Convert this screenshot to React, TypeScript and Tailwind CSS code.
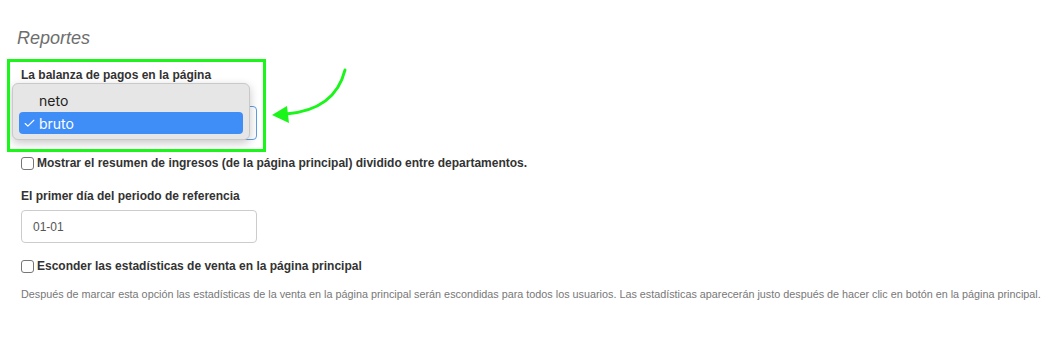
import { Check } from 'lucide-react';

function Checkbox() {
  return (
    <span className="inline-block h-[13px] w-[13px] shrink-0 rounded-[3px] border border-[#767676] bg-white" />
  );
}

export default function App() {
  return (
    <div className="relative h-[354px] w-full overflow-hidden bg-white font-['Liberation_Sans',Arial,sans-serif] text-[#333]">
      <div className="px-[21px] pt-[28px]">
        <h3 className="-ml-[4px] text-[18px] italic leading-[20px] text-[#6e6e6e]">Reportes</h3>

        <div className="mt-[20px]">
          <label className="block text-[12px] font-bold leading-[14px]">La balanza de pagos en la página</label>
          <div className="mt-[24px] flex h-[34px] w-[236px] items-center justify-end rounded-[4px] border border-[#5e9ee6] bg-white px-[6px] text-[12px]">
            <span className="text-[9px] text-[#444]">▾</span>
          </div>
        </div>

        <div className="mt-[16px] flex items-center gap-[3px] text-[12px] font-bold leading-[14px]">
          <Checkbox />
          <span>Mostrar el resumen de ingresos (de la página principal) dividido entre departamentos.</span>
        </div>

        <div className="mt-[19px]">
          <label className="block text-[12px] font-bold leading-[14px]">El primer día del periodo de referencia</label>
          <div className="mt-[7px] flex h-[33px] w-[236px] items-center rounded-[4px] border border-[#cccccc] bg-white px-[11px] text-[12px] text-[#555]">
            01-01
          </div>
        </div>

        <div className="mt-[16px] flex items-center gap-[3px] text-[12px] font-bold leading-[14px]">
          <Checkbox />
          <span>Esconder las estadísticas de venta en la página principal</span>
        </div>

        <p className="mt-[15px] whitespace-nowrap text-[10.8px] leading-[12px] text-[#777]">
          Después de marcar esta opción las estadísticas de la venta en la página principal serán escondidas para todos los usuarios. Las estadísticas aparecerán justo después de hacer clic en botón en la página principal.
        </p>
      </div>

      {/* open select menu */}
      <div className="absolute left-[12px] top-[83px] w-[238px] rounded-[6px] border border-[#c9c9c9] bg-[#e6e6e6] px-[6px] py-[5px] font-['Inter',sans-serif] text-[14px] shadow-[0_3px_10px_rgba(0,0,0,0.22)]">
        <div className="flex h-[22px] items-center pl-[20px] text-[#222]">neto</div>
        <div className="mt-[1px] flex h-[22px] items-center rounded-[4px] bg-[#3f8ef7] text-white">
          <Check className="ml-[4px] h-[13px] w-[13px]" strokeWidth={2} />
          <span className="ml-[3px]">bruto</span>
        </div>
      </div>

      {/* annotation */}
      <div className="absolute left-[7px] top-[59px] h-[93px] w-[259px] border-[3px] border-[#1af51a]" />
      <svg className="absolute left-0 top-0" width="1045" height="354" viewBox="0 0 1045 354" fill="none">
        <path d="M345 70 Q335 110 286 114" stroke="#1af51a" strokeWidth="3" strokeLinecap="round" />
        <polygon points="272,115 287,106 289,123" fill="#1af51a" />
      </svg>
    </div>
  );
}
